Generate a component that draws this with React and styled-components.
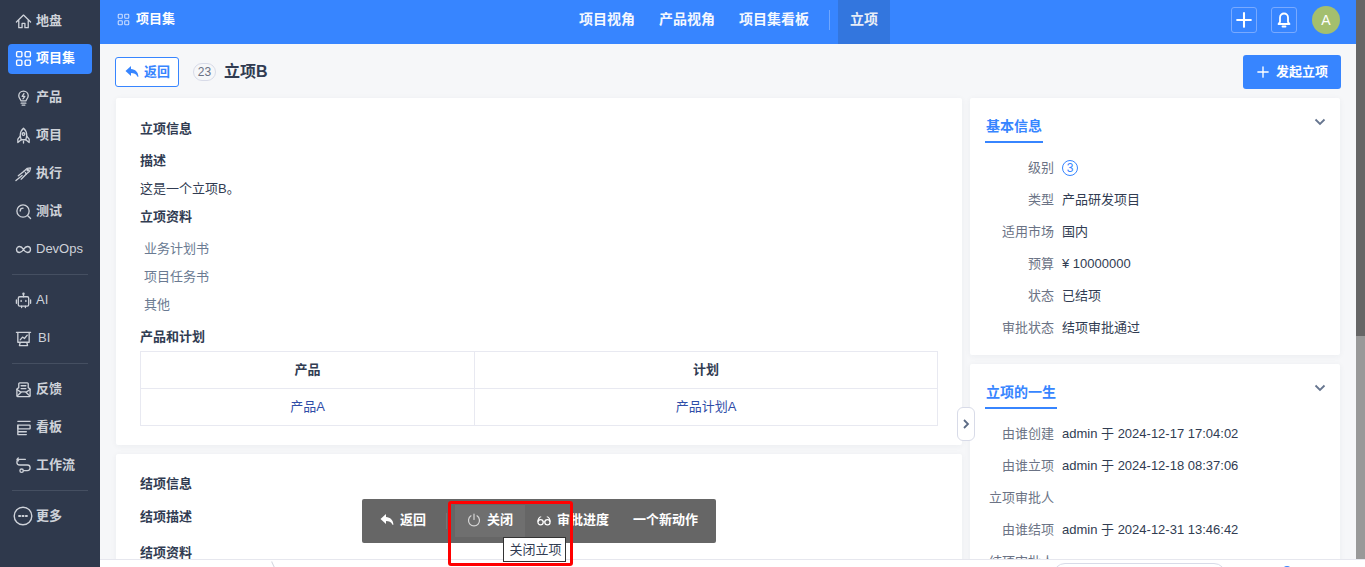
import React from 'react'
import styled, { createGlobalStyle } from 'styled-components'

const GlobalStyle = createGlobalStyle`
  html, body {
    margin: 0;
    height: 100%;
    overflow: hidden;
  }
  body {
    font-family: "Liberation Sans", "Noto Sans CJK SC", sans-serif;
    font-size: 13px;
    line-height: 20px;
    color: #313c52;
  }
  #root {
    height: 100%;
  }
`

const Shell = styled.div`
  position: relative;
  display: flex;
  height: 100vh;
  overflow: hidden;
  background: #f6f7f9;
`

const Sidebar = styled.nav`
  flex: 0 0 100px;
  padding-top: 1px;
  box-sizing: border-box;
  background: #2f394c;
`

const SideItem = styled.div`
  display: flex;
  align-items: center;
  gap: ${(p) => p.$gap || 5}px;
  box-sizing: border-box;
  height: ${(p) => (p.$active ? 30 : 38)}px;
  margin: ${(p) => (p.$active ? '5px 8px 3px' : '0 8px')};
  padding-left: ${(p) => p.$indent || 7}px;
  padding-top: ${(p) => (p.$active ? 0 : 2)}px;
  padding-bottom: ${(p) => (p.$active ? 2 : 0)}px;
  border-radius: 4px;
  color: ${(p) => (p.$active ? '#fff' : '#ced2d9')};
  background: ${(p) => (p.$active ? '#3785ff' : 'transparent')};
  font-weight: ${(p) => (p.$latin ? 400 : 700)};
  svg {
    flex: 0 0 auto;
  }
`

const SideLine = styled.div`
  height: 1px;
  margin: 7px 12px 5px;
  background: #454f61;
`

const Main = styled.div`
  position: relative;
  flex: 1;
  min-width: 0;
  display: flex;
`

const Center = styled.div`
  flex: 1;
  min-width: 0;
  display: flex;
  flex-direction: column;
`

const TopBar = styled.header`
  flex: 0 0 44px;
  display: flex;
  align-items: center;
  background: #3785ff;
  color: #fff;
  font-weight: 700;
`

const Crumb = styled.div`
  flex: 0 0 467px;
  display: flex;
  align-items: center;
  gap: 6px;
  height: 44px;
  padding: 0 0 6px 17px;
  box-sizing: border-box;
`

const TopTab = styled.div`
  display: flex;
  align-items: center;
  box-sizing: border-box;
  height: 44px;
  padding: 0 12px 6px;
  font-size: 14px;
  background: ${(p) => (p.$active ? '#3376de' : 'transparent')};
  color: ${(p) => (p.$active ? '#e9eef7' : '#f4f8ff')};
`

const TopLine = styled.div`
  width: 1px;
  height: 20px;
  margin: 0 8px 4px;
  background: #6ea6ff;
`

const TopActions = styled.div`
  margin-left: auto;
  display: flex;
  align-items: center;
  gap: 14px;
  padding: 0 16px 4px 0;
`

const SquareButton = styled.div`
  display: flex;
  align-items: center;
  justify-content: center;
  box-sizing: border-box;
  width: 26px;
  height: 26px;
  border: 1px solid #79aaff;
  border-radius: 3px;
`

const Avatar = styled.div`
  display: flex;
  align-items: center;
  justify-content: center;
  width: 28px;
  height: 28px;
  margin-left: 1px;
  border-radius: 50%;
  background: #a4bf6e;
  color: #fff;
  font-size: 14px;
  font-weight: 400;
`

const Page = styled.div`
  flex: 1;
  min-height: 0;
  overflow: hidden;
  padding: 11px 16px 0;
`

const PageHead = styled.div`
  display: flex;
  align-items: center;
  height: 34px;
  margin-bottom: 9px;
`

const BackButton = styled.div`
  display: flex;
  align-items: center;
  gap: 5px;
  box-sizing: border-box;
  width: 64px;
  height: 30px;
  margin-left: -1px;
  padding-left: 9px;
  border: 1px solid #3785ff;
  border-radius: 3px;
  background: #fff;
  color: #3785ff;
  font-weight: 700;
`

const IdBadge = styled.span`
  box-sizing: border-box;
  width: 23px;
  height: 18px;
  margin-left: 14px;
  border: 1px solid #d8dbe8;
  border-radius: 9px;
  color: #6b7385;
  font-size: 12px;
  line-height: 16px;
  text-align: center;
`

const PageTitle = styled.h1`
  margin: 0 0 0 8px;
  font-size: 16px;
  line-height: 20px;
  font-weight: 700;
  color: #313c52;
`

const CreateButton = styled.div`
  margin-left: auto;
  display: flex;
  align-items: center;
  gap: 7px;
  box-sizing: border-box;
  width: 98px;
  height: 34px;
  margin-right: -1px;
  padding-left: 14px;
  border-radius: 3px;
  background: #3785ff;
  color: #fff;
  font-weight: 700;
`

const Columns = styled.div`
  display: flex;
  align-items: flex-start;
  gap: 8px;
`

const Column = styled.div`
  flex: ${(p) => (p.$side ? '0 0 370px' : '1')};
  min-width: 0;
  display: flex;
  flex-direction: column;
  gap: 9px;
`

const Card = styled.section`
  position: relative;
  box-sizing: border-box;
  padding: ${(p) => (p.$side ? '12px 16px 12px' : '20px 24px 19px 24px')};
  border-radius: 2px;
  background: #fff;
  box-shadow: 0 1px 6px rgba(49, 60, 82, 0.05);
`

const SectionTitle = styled.div`
  margin-top: ${(p) => p.$top || 0}px;
  font-weight: 700;
  color: #313c52;
`

const Para = styled.div`
  margin-top: 8px;
  color: #313c52;
`

const DocList = styled.div`
  display: flex;
  flex-direction: column;
  gap: 8px;
  margin-top: 12px;
  padding-left: 4px;
`

const DocLink = styled.div`
  color: #6a7a92;
`

const PlanTable = styled.table`
  width: 797px;
  margin-top: 4px;
  border-collapse: collapse;
  table-layout: fixed;
  th, td {
    padding: 0;
    border: 1px solid #e8e9f1;
    text-align: center;
    box-sizing: border-box;
  }
  th {
    height: 37px;
    font-weight: 700;
    color: #313c52;
  }
  td {
    height: 37px;
    color: #2f4da8;
  }
`

const TabTitle = styled.div`
  width: fit-content;
  padding: 6px 1px 5px;
  margin-left: -1px;
  border-bottom: 2px solid #3785ff;
  color: #3785ff;
  font-size: 14px;
  font-weight: 700;
`

const Fold = styled.div`
  position: absolute;
  top: 18px;
  right: 14px;
  line-height: 0;
`

const InfoList = styled.div`
  display: flex;
  flex-direction: column;
  margin-top: 8px;
`

const InfoRow = styled.div`
  display: flex;
  align-items: center;
  gap: 8px;
  box-sizing: border-box;
  height: 32px;
  padding-top: 2px;
`

const InfoLabel = styled.span`
  flex: 0 0 68px;
  text-align: right;
  white-space: nowrap;
  color: #6b7385;
`

const LevelMark = styled.span`
  box-sizing: border-box;
  width: 16px;
  height: 16px;
  border: 1px solid #3785ff;
  border-radius: 50%;
  color: #3785ff;
  font-size: 12px;
  line-height: 14px;
  text-align: center;
`

const FakeScrollbar = styled.div`
  flex: 0 0 9px;
  display: flex;
  flex-direction: column;
  background: #999;
`

const ScrollThumb = styled.div`
  flex: 0 0 336px;
  background: #666;
`

const Footer = styled.footer`
  position: absolute;
  left: 0;
  right: 0;
  bottom: 0;
  height: 8px;
  display: flex;
  align-items: flex-start;
  box-sizing: border-box;
  overflow: hidden;
  border-top: 1px solid #e6e7ee;
  background: #fff;
`

const FooterSlash = styled.div`
  width: 1px;
  height: 9px;
  margin: 1px 0 0 173px;
  background: #d4d7e0;
  transform: rotate(-25deg);
`

const FooterSearch = styled.div`
  box-sizing: border-box;
  width: 173px;
  height: 24px;
  margin: 3px 0 0 779px;
  border: 1px solid #d8dbe8;
  border-radius: 12px;
`

const FooterDot = styled.div`
  width: 8px;
  height: 8px;
  margin: 6px 0 0 57px;
  border-radius: 50%;
  background: #3785ff;
`

const Collapse = styled.div`
  position: absolute;
  left: 857px;
  top: 407px;
  display: flex;
  align-items: center;
  justify-content: center;
  box-sizing: border-box;
  width: 18px;
  height: 34px;
  border: 1px solid #d8dbe8;
  border-radius: 6px;
  background: #fff;
`

const ActionBar = styled.div`
  position: absolute;
  left: 262px;
  top: 499px;
  display: flex;
  align-items: center;
  box-sizing: border-box;
  width: 354px;
  height: 44px;
  padding-left: 6px;
  border-radius: 2px;
  background: #666;
  color: #fff;
  font-weight: 700;
`

const ActionItem = styled.div`
  display: flex;
  align-items: center;
  gap: 6px;
  box-sizing: border-box;
  height: 32px;
  padding: 0 12px 2px;
  background: ${(p) => (p.$active ? '#6f6f6f' : 'transparent')};
`

const ActionLine = styled.div`
  width: 1px;
  height: 16px;
  margin: 0 8px;
  background: #757575;
`

const Tooltip = styled.div`
  position: absolute;
  left: 403px;
  top: 537px;
  box-sizing: border-box;
  width: 63px;
  height: 25px;
  padding-left: 2px;
  border: 1px solid #333;
  background: #fff;
  color: #313c52;
  line-height: 23px;
  text-align: center;
  white-space: nowrap;
`

const RedMark = styled.div`
  position: absolute;
  left: 348px;
  top: 501px;
  box-sizing: border-box;
  width: 125px;
  height: 65px;
  border: 3px solid #f00;
  border-radius: 3px;
  pointer-events: none;
`

const Ico = ({ size = 17, box = 18, color = '#ced2d9', width = 1.4, children }) => (
  <svg
    width={size}
    height={size}
    viewBox={`0 0 ${box} ${box}`}
    fill='none'
    stroke={color}
    strokeWidth={width}
    strokeLinecap='round'
    strokeLinejoin='round'
  >
    {children}
  </svg>
)

const GridIcon = ({ color = '#fff', size = 16 }) => (
  <Ico size={size} box={16} color={color} width={1.3}>
    <rect x='1.500' y='1.500' width='5' height='5' rx='1' />
    <rect x='9.500' y='1.500' width='5' height='5' rx='1' />
    <rect x='1.500' y='9.500' width='5' height='5' rx='1' />
    <rect x='9.500' y='9.500' width='5' height='5' rx='1' />
  </Ico>
)

const ReplyIcon = ({ color = '#fff' }) => (
  <svg width='14' height='14' viewBox='0 0 14 14' fill={color}>
    <path d='M6 1 .5 6 6 11V8c3 0 5 .8 6.400 3.600.4.700 1.100.4 1-.4C13 7 10.500 4.300 6 4Z' />
  </svg>
)

const PlusIcon = ({ size = 14, width = 1.8 }) => (
  <Ico size={size} box={14} color='#fff' width={width}>
    <path d='M7 1v12M1 7h12' />
  </Ico>
)

const ChevronDown = () => (
  <svg width='12' height='12' viewBox='0 0 12 12' fill='none' stroke='#66758f' strokeWidth='1.8'>
    <path d='M1.500 3.500 6 8 10.500 3.500' />
  </svg>
)

const sideIcons = {
  home: (
    <Ico>
      <path d='M1.500 9.500 9 2.200l7.500 7.300M4 8v7.500h3.500v-4.500h3v4.500H14V8' />
    </Ico>
  ),
  bulb: (
    <Ico>
      <path d='M6.300 12.500c0-1.500-2.300-2.400-2.300-5.300a5 5 0 0 1 10 0c0 2.900-2.300 3.800-2.300 5.300ZM6.500 15h5M7.500 17h3' />
      <path d='M9.500 4.800 7.600 7.800h2.800L8.500 10.500' />
    </Ico>
  ),
  rocket: (
    <Ico>
      <path d='M9 1.200c2.300 2 3.400 4.500 3.400 7.300 0 1.900-.4 3.500-1 5H6.600c-.6-1.500-1-3.100-1-5 0-2.800 1.100-5.300 3.400-7.300Z' />
      <circle cx='9' cy='7.500' r='1.400' />
      <path d='M5.700 9.500 3 12.800V16.500l3.600-3M12.300 9.500l2.700 3.300v3.700l-3.600-3M9 15v2' />
    </Ico>
  ),
  run: (
    <Ico>
      <path d='M1 16.500 7.500 11M3.500 11.500l6-5M6.500 15l5.500-5.500-1-1.500' />
      <path d='M9.500 6.500 13 3.500l3.500-.5-1 3.500-3.500 3' />
      <circle cx='13.500' cy='5.500' r='.7' />
    </Ico>
  ),
  test: (
    <Ico>
      <circle cx='8.500' cy='8.500' r='6.500' />
      <path d='M5.500 8.500a3 3 0 0 1 3-3M13.500 13.500l3 3' />
    </Ico>
  ),
  loop: (
    <Ico>
      <path d='M9 9C7.800 7 6.500 5.800 4.800 5.800a3.200 3.200 0 0 0 0 6.400C6.500 12.200 7.800 11 9 9c1.200-2 2.500-3.200 4.200-3.200a3.200 3.200 0 0 1 0 6.400C11.500 12.200 10.200 11 9 9Z' />
    </Ico>
  ),
  robot: (
    <Ico>
      <rect x='3.500' y='5' width='11' height='10' rx='1.500' />
      <path d='M9 5V2.500M1.500 8.500v3.500M16.500 8.500v3.500' />
      <circle cx='9' cy='1.800' r='.6' />
      <path d='M6.500 9v1M11.500 9v1M7 15v1.500M11 15v1.500' />
    </Ico>
  ),
  board: (
    <Ico>
      <path d='M1.500 2.500h15M3 2.500v10.500h12V2.500M5.500 13l-.8 3.500h8.600l-.8-3.500' />
      <path d='M5.500 10.500 8 7.500l2 1.500 3-3.500' />
    </Ico>
  ),
  mail: (
    <Ico>
      <path d='M2 8.500V15.500a1 1 0 0 0 1 1h12a1 1 0 0 0 1-1V8.500l-2-1.500V3a1 1 0 0 0-1-1H5a1 1 0 0 0-1 1v4Z' />
      <path d='M2.500 15.500 7 11.500h4l4.500 4M2 9l4.500 3M16 9l-4.500 3M6.500 5h5M6.500 8h5' />
    </Ico>
  ),
  kanban: (
    <Ico>
      <path d='M3 2.500h13' />
      <rect x='3' y='6.500' width='13' height='4' rx='.5' />
      <path d='M3 6.500V16.500h9M3 13.500h9' />
    </Ico>
  ),
  flow: (
    <Ico>
      <path d='M11 2.500H5a3 3 0 0 0 0 6h8a3 3 0 0 1 0 6H9' />
      <circle cx='7' cy='14.500' r='1.800' />
      <path d='M3.500 1 2 2.500 3.500 4' />
    </Ico>
  ),
}

const MoreIcon = () => (
  <svg width='20' height='20' viewBox='0 0 20 20' fill='none' stroke='#ced2d9' strokeWidth='1.4'>
    <circle cx='10' cy='10' r='8.800' />
    <path d='M6 10h1.200M9.400 10h1.200M12.800 10H14' strokeWidth='1.800' strokeLinecap='round' />
  </svg>
)

const NAV_TOP = [
  { icon: 'home', label: '地盘' },
  { icon: 'grid', label: '项目集', active: true },
  { icon: 'bulb', label: '产品' },
  { icon: 'rocket', label: '项目' },
  { icon: 'run', label: '执行' },
  { icon: 'test', label: '测试' },
  { icon: 'loop', label: 'DevOps', latin: true },
]

const SideEntry = ({ item }) => (
  <SideItem $active={item.active} $latin={item.latin} $gap={item.gap || 4}>
    {item.icon === 'grid' ? <GridIcon size={17} /> : sideIcons[item.icon]}
    <span>{item.label}</span>
  </SideItem>
)

const BASIC_INFO = [
  { label: '类型', value: '产品研发项目' },
  { label: '适用市场', value: '国内' },
  { label: '预算', value: '¥ 10000000' },
  { label: '状态', value: '已结项' },
  { label: '审批状态', value: '结项审批通过' },
]

const LIFE_INFO = [
  { label: '由谁创建', value: 'admin 于 2024-12-17 17:04:02' },
  { label: '由谁立项', value: 'admin 于 2024-12-18 08:37:06' },
  { label: '立项审批人', value: '' },
  { label: '由谁结项', value: 'admin 于 2024-12-31 13:46:42' },
  { label: '结项审批人', value: '' },
]

const App = () => (
  <Shell>
    <GlobalStyle />
    <Sidebar>
      {NAV_TOP.map((item) => (
        <SideEntry key={item.label} item={item} />
      ))}
      <SideLine />
      <SideEntry item={{ icon: 'robot', label: 'AI', latin: true }} />
      <SideEntry item={{ icon: 'board', label: 'BI', latin: true, gap: 6 }} />
      <SideLine />
      <SideEntry item={{ icon: 'mail', label: '反馈' }} />
      <SideEntry item={{ icon: 'kanban', label: '看板' }} />
      <SideEntry item={{ icon: 'flow', label: '工作流' }} />
      <SideLine />
      <SideItem $indent={5} $gap={3}>
        <MoreIcon />
        <span>更多</span>
      </SideItem>
    </Sidebar>

    <Main>
      <Center>
        <TopBar>
          <Crumb>
            <GridIcon color='#cfe0ff' size={13} />
            <span>项目集</span>
          </Crumb>
          <TopTab>项目视角</TopTab>
          <TopTab>产品视角</TopTab>
          <TopTab>项目集看板</TopTab>
          <TopLine />
          <TopTab $active>立项</TopTab>
          <TopActions>
            <SquareButton>
              <PlusIcon size={16} width={1.8} />
            </SquareButton>
            <SquareButton>
              <svg width='16' height='16' viewBox='0 0 16 16' fill='none' stroke='#fff' strokeWidth='1.8'>
                <path d='M8 1.500a4 4 0 0 0-4 4v4.500l-1.500 2h11L12 10V5.500a4 4 0 0 0-4-4Z' strokeLinejoin='round' />
                <path d='M6.500 14.500h3' strokeLinecap='round' />
              </svg>
            </SquareButton>
            <Avatar>A</Avatar>
          </TopActions>
        </TopBar>

        <Page>
          <PageHead>
            <BackButton>
              <ReplyIcon color='#3785ff' />
              <span>返回</span>
            </BackButton>
            <IdBadge>23</IdBadge>
            <PageTitle>立项B</PageTitle>
            <CreateButton>
              <PlusIcon size={12} width={1.6} />
              <span>发起立项</span>
            </CreateButton>
          </PageHead>

          <Columns>
            <Column>
              <Card>
                <SectionTitle $top={1}>立项信息</SectionTitle>
                <SectionTitle $top={12}>描述</SectionTitle>
                <Para>这是一个立项B。</Para>
                <SectionTitle $top={8}>立项资料</SectionTitle>
                <DocList>
                  <DocLink>业务计划书</DocLink>
                  <DocLink>项目任务书</DocLink>
                  <DocLink>其他</DocLink>
                </DocList>
                <SectionTitle $top={12}>产品和计划</SectionTitle>
                <PlanTable>
                  <colgroup>
                    <col width='334' />
                    <col width='463' />
                  </colgroup>
                  <thead>
                    <tr>
                      <th>产品</th>
                      <th>计划</th>
                    </tr>
                  </thead>
                  <tbody>
                    <tr>
                      <td>产品A</td>
                      <td>产品计划A</td>
                    </tr>
                  </tbody>
                </PlanTable>
              </Card>
              <Card>
                <SectionTitle>结项信息</SectionTitle>
                <SectionTitle $top={13}>结项描述</SectionTitle>
                <SectionTitle $top={16}>结项资料</SectionTitle>
              </Card>
            </Column>

            <Column $side>
              <Card $side>
                <TabTitle>基本信息</TabTitle>
                <Fold>
                  <ChevronDown />
                </Fold>
                <InfoList>
                  <InfoRow>
                    <InfoLabel>级别</InfoLabel>
                    <LevelMark>3</LevelMark>
                  </InfoRow>
                  {BASIC_INFO.map((row) => (
                    <InfoRow key={row.label}>
                      <InfoLabel>{row.label}</InfoLabel>
                      <span>{row.value}</span>
                    </InfoRow>
                  ))}
                </InfoList>
              </Card>
              <Card $side>
                <TabTitle>立项的一生</TabTitle>
                <Fold>
                  <ChevronDown />
                </Fold>
                <InfoList>
                  {LIFE_INFO.map((row) => (
                    <InfoRow key={row.label}>
                      <InfoLabel>{row.label}</InfoLabel>
                      <span>{row.value}</span>
                    </InfoRow>
                  ))}
                </InfoList>
              </Card>
            </Column>
          </Columns>
        </Page>
      </Center>
      <FakeScrollbar>
        <ScrollThumb />
      </FakeScrollbar>

      <Footer>
        <FooterSlash />
        <FooterSearch />
        <FooterDot />
      </Footer>

      <Collapse>
        <svg width='8' height='12' viewBox='0 0 8 12' fill='none' stroke='#5c6b85' strokeWidth='1.8'>
          <path d='M2 2l4 4-4 4' />
        </svg>
      </Collapse>

      <ActionBar>
        <ActionItem>
          <ReplyIcon />
          <span>返回</span>
        </ActionItem>
        <ActionLine />
        <ActionItem $active>
          <svg width='14' height='14' viewBox='0 0 14 14' fill='none' stroke='#d5d5d5' strokeWidth='1.2' strokeLinecap='round'>
            <path d='M7 1v5.500M4 2.800a5.500 5.500 0 1 0 6 0' />
          </svg>
          <span>关闭</span>
        </ActionItem>
        <ActionItem>
          <svg width='14' height='14' viewBox='0 0 15 14' fill='none' stroke='#fff' strokeWidth='1.3'>
            <circle cx='3.800' cy='9.500' r='2.800' />
            <circle cx='11.200' cy='9.500' r='2.800' />
            <path d='M6.600 9h1.800M1 9c0-3 1.500-5.500 3.500-5.500M14 9c0-3-1.500-5.500-3.500-5.500' />
          </svg>
          <span>审批进度</span>
        </ActionItem>
        <ActionItem>一个新动作</ActionItem>
      </ActionBar>
      <Tooltip>关闭立项</Tooltip>
      <RedMark />
    </Main>
  </Shell>
)

export default App
